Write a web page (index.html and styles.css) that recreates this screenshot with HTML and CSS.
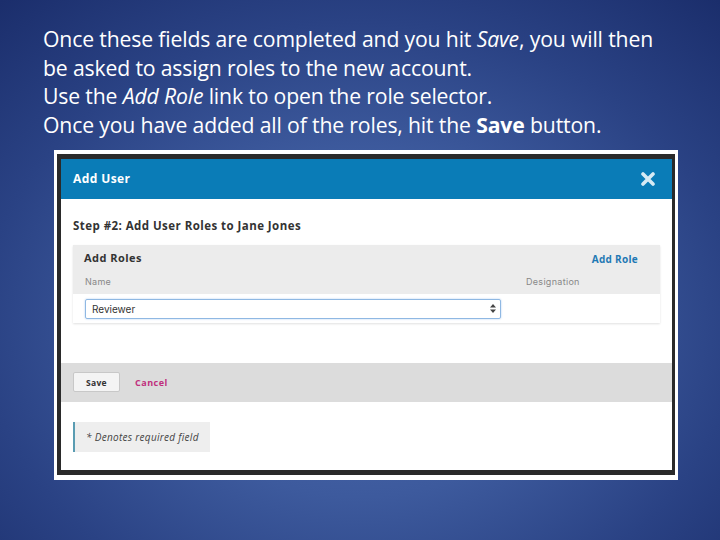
FILE: index.html
```html
<!DOCTYPE html>
<html>
<head>
<meta charset="utf-8">
<link rel="stylesheet" href="styles.css">
</head>
<body>
<div class="slide">
  <div class="intro">
    <p>Once these fields are completed and you hit <i>Save</i>, you will then</p>
    <p>be asked to assign roles to the new account.</p>
    <p>Use the <i>Add Role</i> link to open the role selector.</p>
    <p>Once you have added all of the roles, hit the <b>Save</b> button.</p>
  </div>
  <div class="shot">
    <div class="modal">
      <div class="m-head">
        <span class="m-title">Add User</span>
        <svg class="close" width="16" height="14" viewBox="0 0 16 14"><path d="M3 2 L13 12 M13 2 L3 12" stroke="#d6eaf4" stroke-width="3.6" stroke-linecap="round"/></svg>
      </div>
      <div class="m-body">
        <div class="step">Step #2: Add User Roles to Jane Jones</div>
        <div class="panel">
          <div class="p-top"><span class="p-title">Add Roles</span><span class="p-link">Add Role</span></div>
          <div class="p-cols"><span class="c-name">Name</span><span class="desig">Designation</span></div>
          <div class="p-row">
            <div class="select"><span>Reviewer</span>
              <svg width="6" height="9" viewBox="0 0 6 9"><path d="M3 0 L6 3.5 H0 Z M0 5.5 H6 L3 9 Z" fill="#444"/></svg>
            </div>
          </div>
        </div>
      </div>
      <div class="m-foot">
        <span class="btn">Save</span><span class="cancel">Cancel</span>
      </div>
      <div class="m-note">
        <div class="note">* Denotes required field</div>
      </div>
    </div>
  </div>
</div>
</body>
</html>
```
FILE: styles.css
```css
html, body { margin: 0; padding: 0; }
body { width: 720px; height: 540px; overflow: hidden; }
.slide {
  width: 720px; height: 540px; box-sizing: border-box;
  background: radial-gradient(ellipse 75% 80% at 50% 60%, #4f6db2 0%, #3d5a9d 40%, #2a4284 70%, #1b2e6c 100%);
  padding-top: 25px;
  display: flex; flex-direction: column;
}
.intro {
  padding-left: 43px;
  font-family: "Open Sans", sans-serif;
  font-size: 21.2px; line-height: 28.7px; color: #fff;
  letter-spacing: -0.15px;
}
.intro p { margin: 0; white-space: nowrap; }
.shot {
  margin-top: 10px; margin-left: 54px;
  width: 624px; height: 330px; box-sizing: border-box;
  border-style: solid; border-color: #fff;
  border-width: 4px 3px 5px 3px;
  background: #2a2a2a;
  padding: 5px 3px 5px 4px;
}
.modal {
  width: 611px; height: 311px; background: #fff;
  font-family: "Open Sans", sans-serif;
  display: flex; flex-direction: column;
}
.m-head {
  height: 40px; background: #0a7cb7;
  display: flex; align-items: center; justify-content: space-between;
  padding: 0 16px 0 12px;
}
.m-title { color: #fff; font-weight: 700; font-size: 12px; letter-spacing: 0.4px; }
.close { margin-top: 1px; }
.m-body { padding: 20px 12px 0 12px; }
.step { font-size: 11.5px; font-weight: 700; color: #333; line-height: 14px; letter-spacing: 0.45px; }
.panel { margin-top: 12px; background: #ececec; box-shadow: 0 1px 2px rgba(0,0,0,0.12); }
.p-top { display: flex; justify-content: space-between; align-items: center; padding: 5px 22px 0 11px; height: 16px; }
.p-title { font-size: 11px; font-weight: 700; color: #333; letter-spacing: 0.45px; }
.p-link { font-size: 10px; font-weight: 700; color: #1f79b4; margin-top: 3px; letter-spacing: 0.3px; }
.p-cols { display: flex; padding: 10px 0 0 12px; height: 18px; font-family: "Inter", "Open Sans", sans-serif; font-size: 9px; color: #888; letter-spacing: 0.3px; }
.c-name { width: 441px; }
.p-row { background: #fff; padding: 5px 0 4px 12px; }
.select {
  width: 416px; height: 20px; box-sizing: border-box;
  border: 1px solid #8fb8e3; border-radius: 2px;
  box-shadow: 0 0 2px #a9c9ee;
  display: flex; align-items: center; justify-content: space-between;
  padding: 0 4px 0 6px;
  font-family: "Inter", "Open Sans", sans-serif; font-size: 10px; color: #333;
}
.m-foot {
  margin-top: 40px; height: 39px; background: #dcdcdc;
  display: flex; align-items: center; padding-left: 12px;
}
.btn {
  width: 47px; height: 20px; box-sizing: border-box;
  background: #f4f4f4; border: 1px solid #c8c8c8; border-radius: 2px;
  display: flex; align-items: center; justify-content: center;
  font-size: 8.5px; font-weight: 700; color: #333; letter-spacing: 0.3px;
}
.cancel { margin-left: 15px; font-size: 9px; font-weight: 700; color: #c0307e; letter-spacing: 0.5px; }
.m-note { padding: 20px 12px 0 12px; }
.note {
  width: 137px; height: 30px; box-sizing: border-box;
  background: #eeeeee; border-left: 2px solid #5a9cb2;
  display: flex; align-items: center; padding-left: 11px;
  font-size: 10px; font-style: italic; color: #444; letter-spacing: 0.3px;
  white-space: nowrap;
}
```
